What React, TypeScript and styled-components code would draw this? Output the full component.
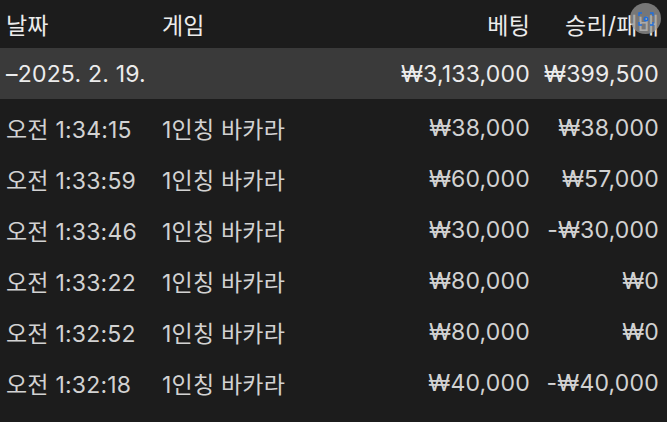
import React from 'react'
import styled, { createGlobalStyle } from 'styled-components'

const GlobalStyle = createGlobalStyle`
  html, body {
    margin: 0;
    padding: 0;
    background: #1c1c1c;
  }
  body {
    font-family: Inter, "Noto Sans CJK KR", sans-serif;
  }
`

const Table = styled.div`
  position: relative;
  width: 667px;
  height: 422px;
  overflow: hidden;
  background: #1c1c1c;
  color: #d6d6d6;
  font-size: 23px;
  letter-spacing: 0.2px;
`

const Row = styled.div<{ $kind?: 'head' | 'sum' | 'item' }>`
  display: grid;
  grid-template-columns: 156px 1fr 134px 129px;
  align-items: center;
  padding: 0 8px 0 6px;
  height: ${(p) => (p.$kind === 'head' ? '48px' : '51px')};
  background: ${(p) => (p.$kind === 'sum' ? '#3a3a3a' : '#1c1c1c')};
  color: ${(p) => (p.$kind === 'item' ? '#d2d2d2' : '#ececec')};
`

const List = styled.div`
  padding-top: 3px;
`

const Cell = styled.div<{ $right?: boolean }>`
  white-space: nowrap;
  text-align: ${(p) => (p.$right ? 'right' : 'left')};
`

const Badge = styled.div`
  position: absolute;
  top: 3px;
  left: 630px;
  width: 31px;
  height: 31px;
  border-radius: 50%;
  background: rgba(150, 150, 150, 0.75);
  display: flex;
  align-items: center;
  justify-content: center;
`

const rows = [
  ['오전 1:34:15', '₩38,000', '₩38,000'],
  ['오전 1:33:59', '₩60,000', '₩57,000'],
  ['오전 1:33:46', '₩30,000', '-₩30,000'],
  ['오전 1:33:22', '₩80,000', '₩0'],
  ['오전 1:32:52', '₩80,000', '₩0'],
  ['오전 1:32:18', '₩40,000', '-₩40,000'],
]

export default function App() {
  return (
    <Table>
      <GlobalStyle />
      <Row $kind="head">
        <Cell>날짜</Cell>
        <Cell>게임</Cell>
        <Cell $right>베팅</Cell>
        <Cell $right>승리/패배</Cell>
      </Row>
      <Row $kind="sum">
        <Cell>–2025. 2. 19.</Cell>
        <Cell />
        <Cell $right>₩3,133,000</Cell>
        <Cell $right>₩399,500</Cell>
      </Row>
      <List>
        {rows.map((r) => (
          <Row $kind="item" key={r[0]}>
            <Cell>{r[0]}</Cell>
            <Cell>1인칭 바카라</Cell>
            <Cell $right>{r[1]}</Cell>
            <Cell $right>{r[2]}</Cell>
          </Row>
        ))}
      </List>
      <Badge>
        <svg width="16" height="16" viewBox="0 0 16 16" fill="none" stroke="#1e6fe0" strokeWidth="1.4">
          <path d="M1 5V2h3M12 2h3v3M15 11v3h-3M4 14H1v-3" />
          <circle cx="8" cy="8" r="1.8" />
        </svg>
      </Badge>
    </Table>
  )
}
